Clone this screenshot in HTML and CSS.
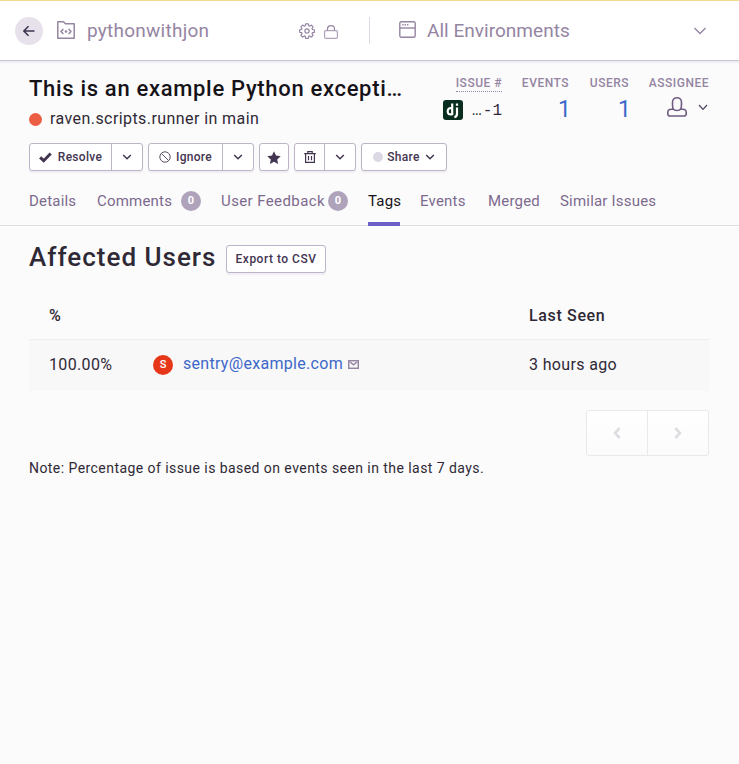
FILE: index.html
```html
<!DOCTYPE html>
<html lang="en">
<head>
<meta charset="utf-8">
<title>Affected Users</title>
<link rel="stylesheet" href="styles.css">
</head>
<body>
<header class="topbar">
  <span class="back"><svg width="12" height="12" viewBox="0 0 12 12"><path d="M11.5 6H1M5.5 1.2L.9 6l4.6 4.8" fill="none" stroke="#3f3450" stroke-width="1.5"/></svg></span>
  <svg class="project-icon" width="18" height="18" viewBox="0 0 18 18" fill="none" stroke="#9585a3" stroke-width="1.5" stroke-linejoin="round"><path d="M.8.8h5.6l2 2h8.8v14.4H.8z"/><path d="M6.4 8L4 10.5 6.4 13M11.6 8l2.4 2.5-2.4 2.5"/><circle cx="9" cy="10.5" r=".6"/></svg>
  <span class="project">pythonwithjon</span>
  <svg class="gear" width="16" height="16" viewBox="0 0 16 16" fill="none" stroke="#9585a3" stroke-width="1.2" stroke-linejoin="round"><path d="M6.6.8h2.8l.4 2 .9.4 1.7-1.1 1.7 1.7-1.1 1.8.4.9 2 .4v2.4l-2 .4-.4.9 1.1 1.7-1.8 1.8-1.7-1.2-.9.4-.4 2H6.7l-.4-2-.9-.4-1.8 1.2-1.7-1.8L3 10.6l-.3-.9-2-.4V6.8l2-.4.3-.9-1.1-1.7 1.7-1.7 1.8 1.1.9-.4z"/><circle cx="8" cy="8" r="2.1"/></svg>
  <svg class="lock" width="14" height="14" viewBox="0 0 14 14" fill="none" stroke="#b0a3bb" stroke-width="1.2"><rect x=".6" y="5.6" width="12.8" height="7.8" rx="1.2"/><path d="M3.5 5.5V4c0-4.5 7-4.5 7 0v1.5" stroke="#9585a3"/></svg>
  <span class="rule"></span>
  <svg class="window-icon" width="17" height="17" viewBox="0 0 17 17" fill="none" stroke="#9585a3" stroke-width="1.4"><rect x=".8" y=".8" width="15.4" height="15.4" rx="1.5"/><path d="M1 7h15"/><path d="M3.2 3.8h6.2" stroke-dasharray="1.4 1"/></svg>
  <span class="environment">All Environments</span>
  <svg class="env-caret" width="12" height="8" viewBox="0 0 12 8"><path d="M.5 1L6 6.5 11.5 1" fill="none" stroke="#9585a3" stroke-width="1.4"/></svg>
</header>

<section class="issue">
  <div class="summary">
    <div class="headline">
      <h1>This is an example Python excepti…</h1>
      <p class="culprit"><span class="level"></span><span>raven.scripts.runner in main</span></p>
    </div>
    <div class="stats">
      <div class="stat stat-issue"><span class="label dotted">ISSUE #</span>
        <span class="short-id"><svg width="20" height="20" viewBox="0 0 20 20"><rect width="20" height="20" rx="3" fill="#092e20"/><path d="M9.2 3.6v10.5c-3.6.7-4.6-.6-4.5-3 .1-2.5 2-3.6 4.4-2.8M14 7.4v6.3c0 2.1-.8 3-2.6 3.5M14 3.6v2.2" fill="none" stroke="#fff" stroke-width="2.2"/></svg><span class="ellipsis">…</span><span class="id">-1</span></span></div>
      <div class="stat stat-events"><span class="label">EVENTS</span><span class="count">1</span></div>
      <div class="stat stat-users"><span class="label">USERS</span><span class="count">1</span></div>
      <div class="stat stat-assignee"><span class="label">ASSIGNEE</span>
        <span class="assignee"><svg width="20" height="20" viewBox="0 0 20 20" fill="none" stroke="#6f5c82" stroke-width="1.6"><path d="M6.4 12.2C5.4 10.8 5.5 8 5.5 5.300c0-6 9-6 9 0 0 2.700.1 5.500-.9 6.900h2c2.400 0 3.600.9 3.600 3v1.500c0 1.500-.8 2.300-2.300 2.300H3.100C1.600 19 .8 18.200.8 16.700V15.200c0-2.100 1.200-3 3.600-3zM6.400 12.200c.5.800 1.500 1.300 3.600 1.300s3.100-.5 3.600-1.300" /></svg><svg width="10" height="7" viewBox="0 0 10 7"><path d="M1 1l4 4.300L9 1" fill="none" stroke="#4d405f" stroke-width="1.2"/></svg></span></div>
    </div>
  </div>

  <div class="actions">
    <div class="button-group">
      <span class="button resolve"><svg width="13" height="12" viewBox="0 0 13 12"><path d="M1.1 6.400l3.600 3.300 7-7.200" fill="none" stroke="#433550" stroke-width="3"/></svg><b>Resolve</b></span>
      <span class="button drop"><svg width="10" height="7" viewBox="0 0 10 7"><path d="M1.200 1L5 4.800 8.800 1"/></svg></span>
    </div>
    <div class="button-group">
      <span class="button ignore"><svg width="12" height="12" viewBox="0 0 12 12"><g fill="none" stroke="#5d5069"><circle cx="6" cy="6" r="5.2"/><path d="M2.3 2.3l7.4 7.4"/></g></svg><b>Ignore</b></span>
      <span class="button drop"><svg width="10" height="7" viewBox="0 0 10 7"><path d="M1.200 1L5 4.800 8.800 1"/></svg></span>
    </div>
    <div class="button-group"><span class="button star"><svg width="14" height="13" viewBox="0 0 14 13"><path d="M7 .3l2 4.3 4.7.6-3.5 3.2.9 4.5L7 10.7l-4.1 2.2.9-4.5L.3 5.2 5 4.6z" fill="#433550"/></svg></span></div>
    <div class="button-group">
      <span class="button trash"><svg width="12" height="12" viewBox="0 0 12 12" fill="none" stroke="#433550" stroke-width="1.2"><path d="M.2 2.6h11.6M3.8 2.4V.7h4.4v1.7M1.6 2.8v8.6h8.8V2.8M4.5 5v4.2M7.5 5v4.2"/></svg></span>
      <span class="button drop"><svg width="10" height="7" viewBox="0 0 10 7"><path d="M1.200 1L5 4.800 8.800 1"/></svg></span>
    </div>
    <div class="button-group share drop"><span class="button"><span class="share-dot"></span><b>Share</b><svg width="10" height="7" viewBox="0 0 10 7"><path d="M1.200 1L5 4.800 8.800 1"/></svg></span></div>
  </div>

  <nav class="tabs">
    <a class="t-details">Details</a>
    <a class="t-comments"><span>Comments</span><i class="badge">0</i></a>
    <a class="t-feedback"><span>User Feedback</span><i class="badge">0</i></a>
    <a class="t-tags active">Tags</a>
    <a class="t-events">Events</a>
    <a class="t-merged">Merged</a>
    <a class="t-similar">Similar Issues</a>
  </nav>
</section>

<main class="content">
  <div class="title-row"><h2>Affected Users</h2><span class="export"><b>Export to CSV</b></span></div>
  <div class="table">
    <div class="row head"><span>%</span><span></span><span class="seen-head">Last Seen</span></div>
    <div class="row body">
      <span class="percent">100.00%</span>
      <span class="user"><span class="avatar">S</span><a>sentry@example.com</a><svg width="11" height="9" viewBox="0 0 11 9" fill="none" stroke="#9585a3" stroke-width="1.5"><rect x=".7" y=".7" width="9.600" height="7.600"/><path d="M2 2l3.500 2.800L9 2"/></svg></span>
      <span class="seen">3 hours ago</span>
    </div>
  </div>
  <div class="pager">
    <span><svg width="8" height="12" viewBox="0 0 8 12"><path d="M6.700 1L2 6l4.700 5"/></svg></span>
    <span><svg width="8" height="12" viewBox="0 0 8 12"><path d="M1.300 1L6 6l-4.700 5"/></svg></span>
  </div>
  <p class="note">Note: Percentage of issue is based on events seen in the last 7 days.</p>
</main>
</body>
</html>
```
FILE: styles.css
```css
* { box-sizing: border-box; }
body { margin: 0; min-height: 764px; background: #fbfbfb; color: #2f2936; font-family: Roboto, "Liberation Sans", sans-serif; font-size: 16px; white-space: nowrap; }
h1, h2, p { margin: 0; }
svg { display: block; flex: none; }
b { font-weight: 500; }

.topbar { height: 61px; display: flex; align-items: center; padding-left: 15px; background: #fff; border-top: 1px solid #f5d98d; border-bottom: 1px solid #c9c4d4; box-shadow: 0 2px 0 #f0eef5; color: #9585a3; font-size: 19px; line-height: 24px; }
.back { width: 28px; height: 28px; border-radius: 50%; background: #e7e1ec; display: flex; align-items: center; justify-content: center; margin-right: 14px; }
.project-icon { margin-top: -1px; }
.project { width: 212px; margin-left: 12px; letter-spacing: .25px; }
.gear { margin-right: 9px; }
.lock { margin-top: 3px; }
.rule { width: 1px; height: 27px; background: #ddd8e3; margin: 0 29px 0 31px; }
.window-icon { margin-top: -2px; }
.environment { width: 267px; margin-left: 11px; letter-spacing: .03px; }

.issue { height: 165px; border-bottom: 1px solid #e0dee3; padding: 14px 30px 0 29px; }
.summary { display: flex; justify-content: space-between; height: 68px; }
h1 { color: #161318; font-size: 22px; line-height: 27px; font-weight: 500; letter-spacing: .68px; }
.culprit { display: flex; align-items: center; margin-top: 7px; line-height: 20px; letter-spacing: .42px; }
.level { width: 13px; height: 13px; border-radius: 50%; background: #ec5e44; margin-right: 8px; }
.stats { display: flex; gap: 20px; }
.stat { display: flex; flex-direction: column; align-items: flex-end; }
.label { color: #9585a3; font-size: 12px; line-height: 16px; font-weight: 500; letter-spacing: .5px; }
.dotted { border-bottom: 1px dotted #9585a3; }
.stat-issue { width: 60px; }
.stat-events { width: 47px; }
.stat-users { width: 40px; }
.stat-assignee { width: 60px; }
.short-id { width: 59px; display: flex; align-items: center; margin-top: 7px; font: 16px/20px "Liberation Mono", monospace; }
.ellipsis { margin-left: 9px; width: 11px; }
.id, .ellipsis { padding-top: 2px; }
.count { color: #3d68c9; font-size: 23px; line-height: 26px; margin: 6px -2px 0 0; }
.assignee { display: flex; align-items: center; gap: 11px; margin: 6px 1px 0 0; }

.actions { display: flex; gap: 5px; }
.button-group, .export { height: 28px; display: flex; border: 1px solid #bdb4c7; border-radius: 3px; background: #fff; box-shadow: 0 2px 1px #f0eef2; font-size: 12px; color: #433550; }
.button { display: flex; align-items: center; justify-content: center; }
.button b { letter-spacing: .3px; }
.button + .button { border-left: 1px solid #bdb4c7; }
.drop { width: 31px; }
.drop path { fill: none; stroke: #433550; stroke-width: 1.5; }
.resolve { width: 81px; gap: 6px; }
.ignore { width: 73px; gap: 5px; }
.star { width: 28px; }
.trash { width: 29px; }
.share { width: 86px; justify-content: center; }
.share-dot { width: 10px; height: 10px; border-radius: 50%; background: #dcd8e4; margin-right: 4px; }
.share svg { margin-left: 5px; }

.tabs { display: flex; height: 55px; color: #7c6a8e; font-size: 15px; line-height: 20px; letter-spacing: .2px; }
.tabs a { display: flex; justify-content: space-between; margin-right: 20px; padding-top: 20px; height: 55px; flex: none; }
.badge { width: 20px; height: 20px; border-radius: 50%; background: #afa3bb; color: #fff; font-style: normal; font-weight: 700; font-size: 11px; text-align: center; letter-spacing: 0; }
.t-details { width: 48px; }
.t-comments { width: 104px; }
.t-feedback { width: 127px; letter-spacing: .4px; }
.t-tags { width: 32px; }
.t-events { width: 48px; }
.t-merged { width: 52px; }
.tabs .active { color: #161318; border-bottom: 4px solid #6c5fc7; }

.content { padding: 18px 30px 0 29px; }
.title-row { display: flex; align-items: flex-start; height: 66px; }
h2 { width: 197px; margin-top: -1px; font-size: 26px; line-height: 28px; font-weight: 500; letter-spacing: 1px; }
.export { margin-top: 1px; width: 100px; align-items: center; justify-content: center; letter-spacing: .5px; }
.row { display: grid; grid-template-columns: 104px 376px 1fr; align-items: center; padding-left: 20px; height: 51px; }
.head { height: 48px; font-weight: 500; letter-spacing: .65px; }
.table { margin-top: -19px; }
.body { height: 52px; background: #f8f8f8; border-top: 1px solid #eeedef; }
.percent, .seen { margin-top: -2px; letter-spacing: .35px; }
.user { display: flex; align-items: center; margin-top: -1px; }
.user a { color: #3d68c9; margin: -3px 5px 0 10px; letter-spacing: .3px; }
.user svg { margin-top: -1px; }
.avatar { width: 20px; height: 20px; border-radius: 50%; background: #e73719; color: #fff; font-size: 11px; font-weight: 500; line-height: 20px; text-align: center; }
.pager { display: flex; width: 123px; height: 46px; margin: 19px 0 0 auto; border: 1px solid #e9e8eb; border-radius: 3px; background: linear-gradient(#fff, #fbfbfb); }
.pager span { flex: 1; display: flex; align-items: center; justify-content: center; }
.pager span + span { border-left: 1px solid #e9e8eb; }
.pager path { fill: none; stroke: #dcdee2; stroke-width: 2.6; }
.note { margin-top: 2px; font-size: 14px; line-height: 20px; letter-spacing: .44px; }
```
